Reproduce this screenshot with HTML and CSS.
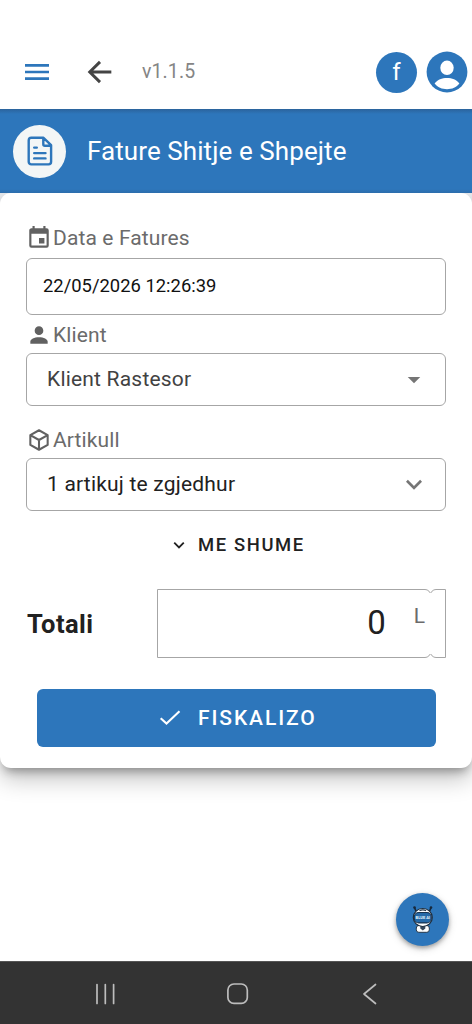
FILE: index.html
```html
<!DOCTYPE html>
<html lang="sq">
<head>
<meta charset="utf-8">
<meta name="viewport" content="width=device-width, initial-scale=1">
<title>Fature Shitje e Shpejte</title>
<link rel="stylesheet" href="styles.css">
</head>
<body>
<div class="app">
  <header class="topbar">
    <svg class="menu" width="32" height="32" viewBox="0 0 24 24"><path fill="#2d76bb" d="M3 6h18v2H3zm0 5h18v2H3zm0 5h18v2H3z"/></svg>
    <svg class="back" width="32" height="32" viewBox="0 0 24 24"><path d="M20.5 12H4.7M12 4.400L4.300 12l7.700 7.600" fill="none" stroke="#444" stroke-width="2.200"/></svg>
    <span class="version">v1.1.5</span>
    <span class="avatar">f</span>
    <svg class="user" width="42" height="42" viewBox="0 0 42 42"><circle cx="21" cy="21" r="20.400" fill="#2d76bb"/><ellipse cx="21" cy="16.800" rx="6.700" ry="7.200" fill="#fff"/><path d="M8.600 32.600C11.500 28.700 16 27 21 27s9.500 1.700 12.400 5.600C30.500 36.500 26 38.300 21 38.300S11.500 36.500 8.600 32.600z" fill="#fff"/></svg>
  </header>

  <section class="banner">
    <span class="banner-icon">
      <svg width="26" height="32" viewBox="0 0 26 32" fill="none" stroke="#2d76bb" stroke-width="2.400" stroke-linecap="round" stroke-linejoin="round"><path d="M16.500 2.800H4.300a2.600 2.600 0 0 0-2.600 2.600v21.400a2.600 2.600 0 0 0 2.600 2.600h17.200a2.600 2.600 0 0 0 2.600-2.600V10.200zM16.300 3.100v6.100a1.500 1.500 0 0 0 1.500 1.500h6M7.200 12.600h2.600M7.200 18.100h11.300M7.200 23.400h11.300"/></svg>
    </span>
    <h1 class="title">Fature Shitje e Shpejte</h1>
  </section>

  <div class="sheet">
  <main class="card">
    <div class="label label-date">
      <svg width="26" height="26" viewBox="0 0 24 24"><path fill="#616161" d="M19 3h-1V1h-2v2H8V1H6v2H5c-1.110 0-2 .9-2 2v14a2 2 0 0 0 2 2h14a2 2 0 0 0 2-2V5a2 2 0 0 0-2-2m0 16H5V8h14zm-7-7h5v5h-5z"/></svg>
      <span class="label-text t-date">Data e Fatures</span>
    </div>
    <div class="field field-date"><span class="v-date">22/05/2026 12:26:39</span></div>

    <div class="label label-client">
      <svg width="26" height="26" viewBox="0 0 24 24"><path fill="#616161" d="M12 4a4 4 0 1 1 0 8 4 4 0 0 1 0-8m0 10c4.420 0 8 1.790 8 4v2H4v-2c0-2.210 3.580-4 8-4"/></svg>
      <span class="label-text">Klient</span>
    </div>
    <div class="field select">
      <span class="v-client">Klient Rastesor</span>
      <svg width="32" height="32" viewBox="0 0 24 24"><path fill="#757575" d="M7.300 9.700h9.400L12 14.400z"/></svg>
    </div>

    <div class="label label-item">
      <svg width="26" height="26" viewBox="0 0 24 24" fill="none" stroke="#616161" stroke-width="1.900" stroke-linejoin="round"><path d="M12 3l8 4.500v9L12 21l-8-4.500v-9zM4 7.500l8 4.500 8-4.500M12 12v9"/></svg>
      <span class="label-text">Artikull</span>
    </div>
    <div class="field select">
      <span class="v-item">1 artikuj te zgjedhur</span>
      <svg width="32" height="32" viewBox="0 0 24 24"><path fill="#757575" d="M7.410 8.080L12 12.670l4.590-4.590L18 9.500l-6 6-6-6z"/></svg>
    </div>

    <div class="more">
      <svg width="24" height="24" viewBox="0 0 24 24"><path d="M6.800 9.500L12 14.700l5.200-5.200" fill="none" stroke="#212121" stroke-width="2"/></svg>
      <span>ME SHUME</span>
    </div>

    <div class="total">
      <strong class="total-label">Totali</strong>
      <div class="total-box">
        <div class="amount"><span class="number">0</span><span class="currency">L</span></div>
        <div class="amount-end"></div>
      </div>
    </div>

    <div class="submit">
      <svg width="24" height="24" viewBox="0 0 24 24"><path d="M2.700 12.200l5.800 5.400L21.500 5.300" fill="none" stroke="#fff" stroke-width="2.100"/></svg>
      <span>FISKALIZO</span>
    </div>
  </main>
  </div>

  <div class="assist">
    <span class="bot">
      <svg width="26" height="32" viewBox="0 0 26 32">
        <path d="M6.500 8.500L4.500 3.500M19 8.500L21 3.500" stroke="#17283c" stroke-width="1.700"/>
        <circle cx="4.500" cy="3.500" r="1.300" fill="#17283c"/><circle cx="21" cy="3.500" r="1.300" fill="#17283c"/>
        <rect x="6.300" y="21.500" width="13" height="6.800" rx="2.500" fill="#fff" stroke="#26384a"/>
        <path d="M10.300 21h5v3.500l-2.500 2-2.500-2z" fill="#35475a"/>
        <ellipse cx="12.800" cy="13.500" rx="9.500" ry="9" fill="#fff" stroke="#1d2b3a" stroke-width="1.200"/>
        <path d="M9.500 6.700q3.300-1.500 6.600 0" fill="none" stroke="#26384a" stroke-width="1.200"/>
        <rect x="4.300" y="8.500" width="17" height="10.400" rx="4.500" fill="#2569a8" stroke="#17324e" stroke-width="1.100"/>
        <text class="bot-text" x="12.800" y="15.300" text-anchor="middle" fill="#e6f6ff">BLUE AI</text>
      </svg>
    </span>
  </div>

  <nav class="navbar">
    <svg width="22" height="22" viewBox="0 0 22 22"><path d="M3 1.500v19M11.300 1.500v19M19.600 1.500v19" stroke="#bdbdbd" stroke-width="1.700" stroke-linecap="round"/></svg>
    <svg width="22" height="22" viewBox="0 0 22 22"><rect x="0.900" y="1" width="19.400" height="19.400" rx="6" fill="none" stroke="#bdbdbd" stroke-width="1.700"/></svg>
    <svg width="22" height="22" viewBox="0 0 22 22"><path d="M16.500 1.500L5 11l11.500 9.500" fill="none" stroke="#bdbdbd" stroke-width="1.700" stroke-linecap="round" stroke-linejoin="round"/></svg>
  </nav>
</div>
</body>
</html>
```
FILE: styles.css
```css
* { box-sizing: border-box; }
body { margin: 0; font-family: Roboto, sans-serif; background: #fff; }
svg { display: block; flex: none; }
.app { width: 472px; height: 1024px; display: flex; flex-direction: column; overflow: hidden; }

.topbar { height: 109px; padding: 35px 4px 0 21px; display: flex; align-items: center; flex: none; }
.back { margin-left: 31px; }
.version { margin-left: 26px; padding-bottom: 1px; font-size: 19.500px; letter-spacing: .1px; color: #858585; }
.avatar { margin-left: auto; width: 41px; height: 41px; border-radius: 50%; background: #2d76bb; color: #fff; font-size: 24px; display: flex; align-items: center; justify-content: center; }
.user { margin-left: 9px; }

.banner { height: 84px; flex: none; display: flex; align-items: center; padding-left: 13px; background: linear-gradient(#2b639c, #2d76bb 5px, #2d76bb 80px, #2c6dac); }
.banner-icon { width: 53px; height: 53px; border-radius: 50%; background: #f3f6f6; display: flex; align-items: center; justify-content: center; }
.title { margin: 0 0 0 21px; font-size: 26px; line-height: 34px; font-weight: 400; letter-spacing: .08px; color: #fff; white-space: nowrap; }

.sheet { flex: none; background: linear-gradient(#e8eaed 20px, #fff 20px); }
.card { height: 575px; padding: 32px 26px 0; border-radius: 11px; background: #fff; box-shadow: 0 7px 10px -4px rgba(0,0,0,.32), 0 11px 23px rgba(0,0,0,.24); clip-path: inset(0 0 -60px 0); }
.label { height: 26px; display: flex; align-items: center; color: #6b6b6b; }
.label-text { margin-left: 1px; font-size: 21px; line-height: 26px; letter-spacing: .12px; white-space: nowrap; }
.field { border: 1px solid #a6a6a6; border-radius: 6px; display: flex; align-items: center; white-space: nowrap; }
.field-date { height: 57px; margin-top: 7px; padding: 0 0 2px 16px; font-size: 18.400px; color: #111; }
.label-client { margin-top: 7px; }
.select { height: 53px; margin-top: 5px; padding: 0 15px 0 20px; justify-content: space-between; font-size: 21px; letter-spacing: .2px; }
.select span { padding-bottom: 2px; }
.label-item { margin-top: 21px; }
.v-client { color: #424242; }
.v-item { color: #212121; }

.more { height: 24px; margin-top: 22px; padding-left: 141px; display: flex; align-items: center; gap: 7px; font-size: 18.400px; font-weight: 500; letter-spacing: 1.640px; color: #212121; }
.more svg { padding: 1px; }
.more span { padding-bottom: 2px; }

.total { height: 69px; margin-top: 32px; display: flex; align-items: center; }
.total-label { width: 131px; padding-left: 1px; font-size: 25.500px; font-weight: 700; letter-spacing: .45px; color: #212121; }
.total-box { flex: 1; height: 69px; display: flex; }
.amount { position: relative; width: 274px; height: 69px; border: 1px solid #a6a6a6; border-radius: 0 6px 6px 0; display: flex; justify-content: flex-end; padding-right: 5px; }
.number { font-size: 33px; line-height: 66px; color: #212121; }
.currency { margin-left: 28px; font-size: 21px; line-height: 53px; color: #6b6b6b; }
.amount-end { position: relative; flex: 1; margin-left: -1px; border: 1px solid #a6a6a6; border-radius: 6px 0 0 6px; }
/* The outline stays open where the two halves of the field meet. */
.amount::after, .amount-end::before { content: ""; position: absolute; top: 3px; bottom: 3px; width: 3px; background: #fff; }
.amount::after { right: -1px; }
.amount-end::before { left: -1px; }

.submit { height: 58px; margin: 31px 10px 0 11px; padding-left: 121px; border-radius: 6px; background: #2d76bb; color: #fff; display: flex; align-items: center; gap: 16px; font-size: 21px; font-weight: 500; letter-spacing: 1.900px; }

.assist { flex: 1; padding: 125px 23px 0 0; display: flex; justify-content: flex-end; }
.bot { width: 53px; height: 53px; border-radius: 50%; background: #2d76bb; display: flex; align-items: center; justify-content: center; box-shadow: 0 2px 4px rgba(0,0,0,.3), 0 3px 9px rgba(0,0,0,.15); }
.bot-text { font-size: 4px; font-weight: 700; }

.navbar { height: 63px; flex: none; padding: 2px 91px 0 94px; background: #333; border-top: 1px solid #555; display: flex; align-items: center; justify-content: space-between; }
```
